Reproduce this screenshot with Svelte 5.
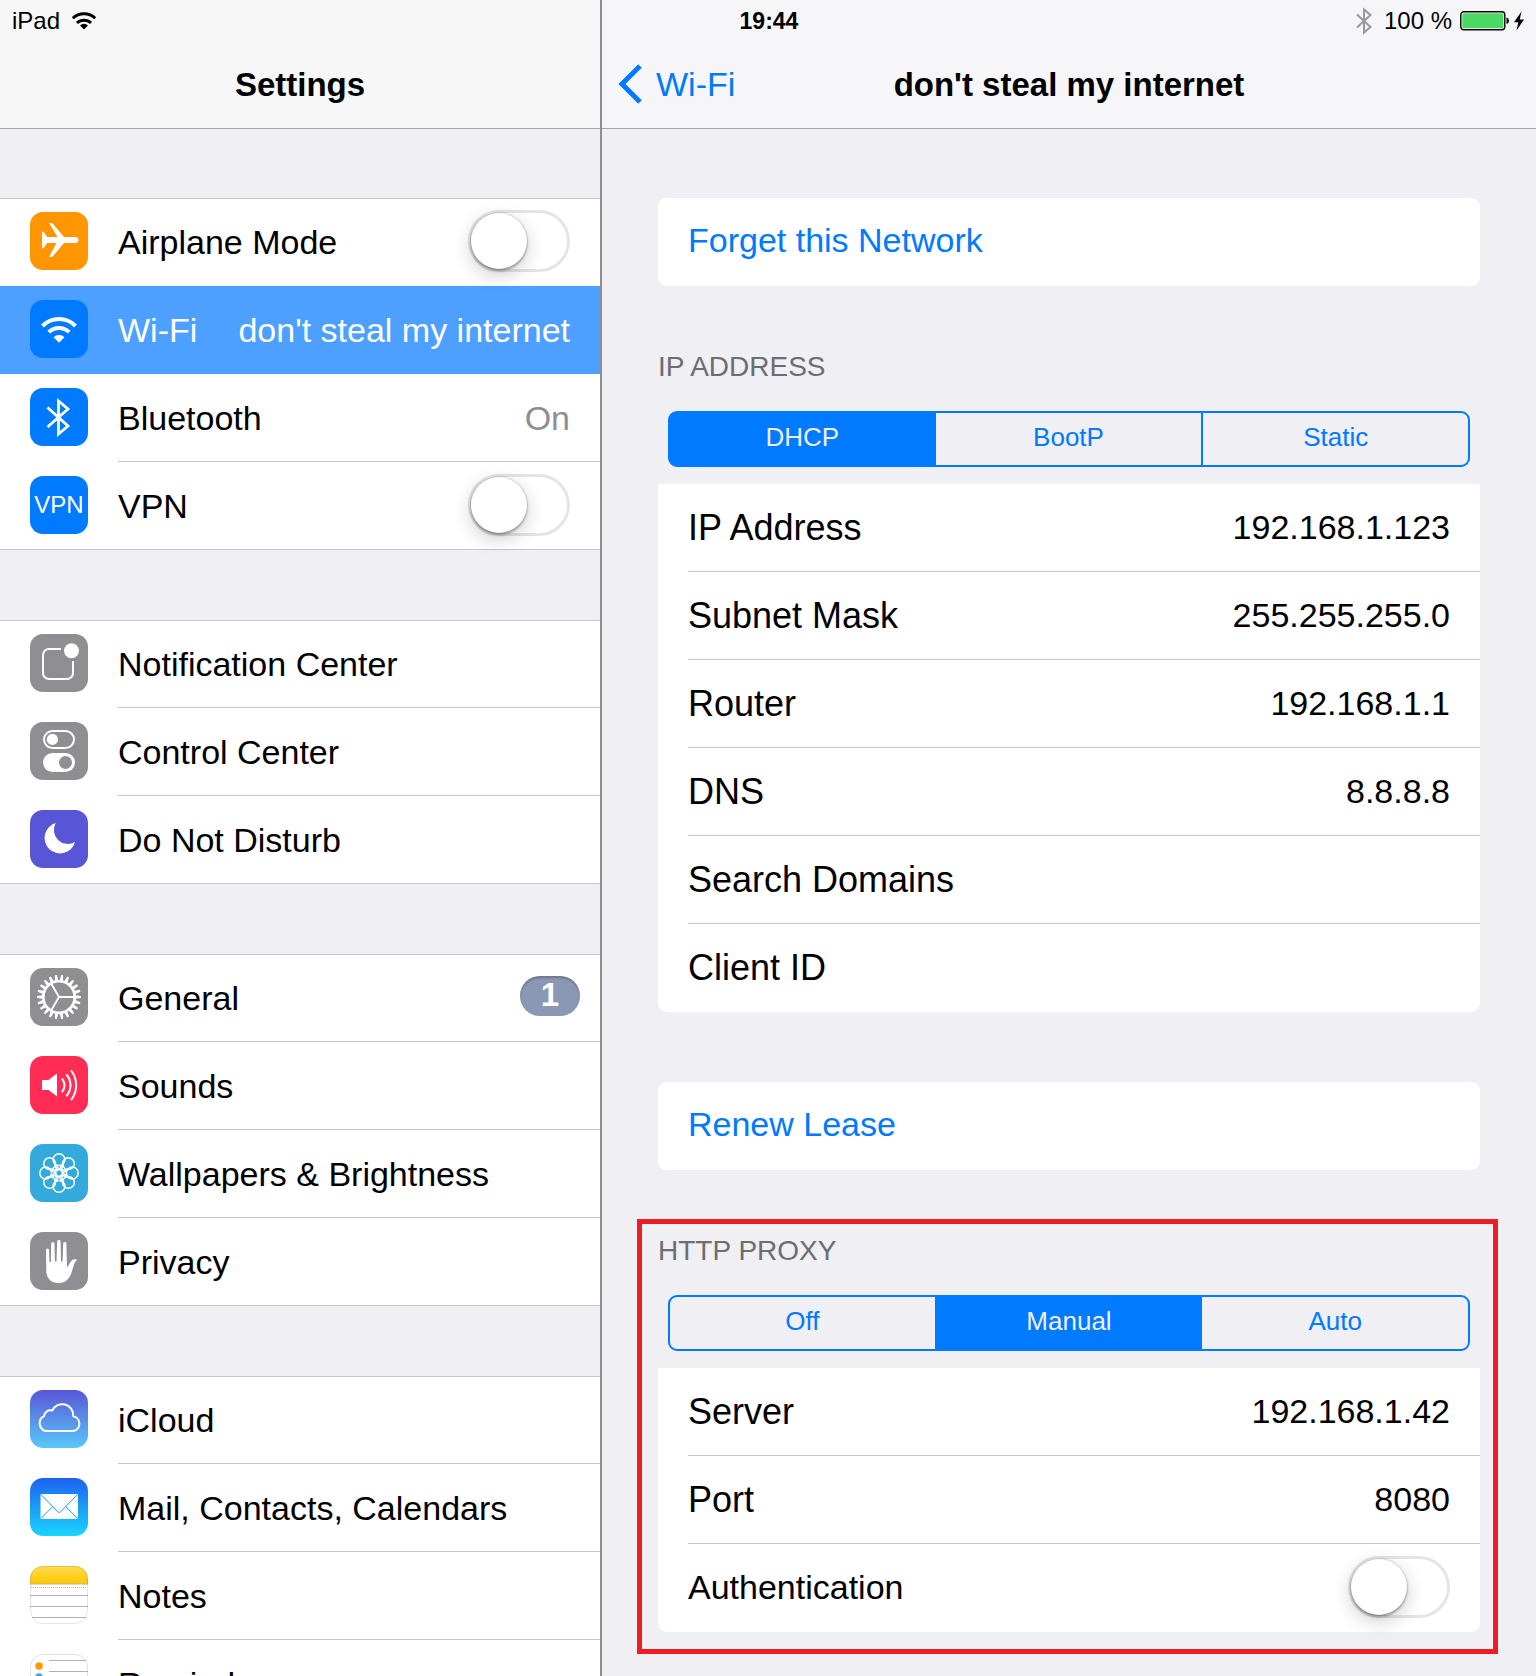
<script>
    let airplane = $state(false);
    let vpn = $state(false);
    let authentication = $state(false);

    let ipMode = $state("DHCP");
    let proxyMode = $state("Manual");

    let network = "don't steal my internet";

    let groups = [
        [
            { icon: "airplane", label: "Airplane Mode", toggle: "airplane" },
            { icon: "wifi", label: "Wi-Fi", value: network, selected: true },
            { icon: "bluetooth", label: "Bluetooth", value: "On" },
            { icon: "vpn", label: "VPN", toggle: "vpn" },
        ],
        [
            { icon: "notification", label: "Notification Center" },
            { icon: "control", label: "Control Center" },
            { icon: "moon", label: "Do Not Disturb" },
        ],
        [
            { icon: "gear", label: "General", badge: 1 },
            { icon: "sound", label: "Sounds" },
            { icon: "flower", label: "Wallpapers & Brightness" },
            { icon: "hand", label: "Privacy" },
        ],
        [
            { icon: "cloud", label: "iCloud" },
            { icon: "mail", label: "Mail, Contacts, Calendars" },
            { icon: "notes", label: "Notes" },
            { icon: "reminders", label: "Reminders" },
        ],
    ];

    let fields = $state([
        { label: "IP Address", value: "192.168.1.123" },
        { label: "Subnet Mask", value: "255.255.255.0" },
        { label: "Router", value: "192.168.1.1" },
        { label: "DNS", value: "8.8.8.8" },
        { label: "Search Domains", value: "" },
        { label: "Client ID", value: "" },
    ]);

    let proxy = $state([
        { label: "Server", value: "192.168.1.42" },
        { label: "Port", value: "8080" },
    ]);

    const tiles = {
        airplane: "#ff9500",
        wifi: "#007aff",
        bluetooth: "#007aff",
        vpn: "#007aff",
        notification: "#8e8e93",
        control: "#8e8e93",
        moon: "#5856d6",
        gear: "#8e8e93",
        sound: "#ff2d55",
        flower: "#34aadc",
        hand: "#8e8e93",
        cloud: "url(#cloud-bg)",
        mail: "url(#mail-bg)",
        notes: "#fff",
        reminders: "#fff",
    };

    const teeth = Array.from({ length: 22 }, (_, i) => 90 + (i * 360) / 22);
    const petals = Array.from({ length: 8 }, (_, i) => i * 45);
</script>

{#snippet icon(name)}
    <svg class="icon" viewBox="0 0 58 58" aria-hidden="true">
        <rect width="58" height="58" rx="13" fill={tiles[name]} />
        {#if name === "airplane"}
            <path fill="#fff" d="M12 19.500h1.200l4 5.500h10.300L19 11h3.200L34 25h11.500a3 3 0 0 1 0 6H34L22.200 45H19l7.500-14h-9.300l-4 5.500H12z" />
        {:else if name === "wifi"}
            <g fill="none" stroke="#fff" stroke-width="4">
                <path d="M12.500 26a23 23 0 0 1 33 0" />
                <path d="M18.800 32.200a14.300 14.300 0 0 1 20.400 0" />
            </g>
            <path fill="#fff" d="M23.500 37.300a7.600 7.600 0 0 1 11 0L29 42.800z" />
        {:else if name === "bluetooth"}
            <path fill="none" stroke="#fff" stroke-width="2.800" d="M17.500 19.500 38 38l-9.500 8V13l9.500 8-20.500 18" />
        {:else if name === "vpn"}
            <text x="29" y="37" text-anchor="middle" fill="#fff" font-size="24">VPN</text>
        {:else if name === "notification"}
            <path fill="none" stroke="#fff" stroke-width="2" d="M31 15H19a6 6 0 0 0-6 6v18a6 6 0 0 0 6 6h18a6 6 0 0 0 6-6V27" />
            <circle cx="41.500" cy="16.700" r="7.500" fill="#fff" />
        {:else if name === "control"}
            <rect x="14" y="9" width="30" height="17" rx="8.500" fill="none" stroke="#fff" stroke-width="2" />
            <circle cx="22.400" cy="17.400" r="5.600" fill="#fff" />
            <rect x="13" y="31" width="32" height="19" rx="9.500" fill="#fff" />
            <circle cx="35.500" cy="40.500" r="6.500" fill="#8e8e93" />
        {:else if name === "moon"}
            <path fill="#fff" d="M25.700 13A15.500 15.500 0 1 0 45 32 14 14 0 0 1 25.700 13z" />
        {:else if name === "gear"}
            <circle cx="29" cy="29" r="15.700" fill="none" stroke="#fff" stroke-width="2.600" />
            {#each teeth as angle}
                <path fill="#fff" d="M27.300 12.500 28 7h2l.7 5.500z" transform="rotate({angle} 29 29)" />
            {/each}
            <path fill="none" stroke="#fff" stroke-width="1.900" d="M45 29H29L21 15.200M29 29l-8 13.800" />
        {:else if name === "sound"}
            <path fill="#fff" d="M12 24h6.500L27 17.500v23L18.500 34H12z" />
            <g fill="none" stroke="#fff" stroke-width="2" stroke-linecap="round">
                <path d="M32.300 23a10 10 0 0 1 0 12.500" />
                <path d="M36.800 19a16 16 0 0 1 0 20.500" />
                <path d="M41.500 15a24 24 0 0 1 0 28.500" />
            </g>
        {:else if name === "flower"}
            <g fill="none" stroke="#fff" stroke-width="1.500">
                <circle cx="29" cy="29" r="3.400" />
                {#each petals as angle}
                    <g transform="rotate({angle} 29 29)">
                        <circle cx="29" cy="15.700" r="5.900" />
                        <path d="M24.300 18.500 29 25.600l4.700-7.100" />
                    </g>
                {/each}
            </g>
        {:else if name === "hand"}
            <path fill="#fff" d="M16 18a1.500 1.500 0 0 1 3 0l.5 12h1.400L21.200 11.500a1.600 1.600 0 0 1 3.200 0L24.900 29.500h1.600L27.200 9.500a1.700 1.700 0 0 1 3.400 0L31 29.500h1.600L33.200 11.500a1.600 1.600 0 0 1 3.200 0L37 34.500c1.500 0 2-2 3-3.800 1.600-3 4-4.200 7-3-2.500 2.500-3.500 6-5 11.300C40 46.500 36 51 28.500 51S16.500 46.500 16.300 39z" />
        {:else if name === "cloud"}
            <path fill="none" stroke="#fff" stroke-width="2" stroke-linejoin="round" d="M15.500 41A8 8 0 0 1 14 26.200a6.600 6.600 0 0 1 8.300-5.700 11 11 0 0 1 20.900 5.700A7.500 7.500 0 0 1 43 41z" />
        {:else if name === "mail"}
            <rect x="10.500" y="16" width="37.500" height="25" rx="1" fill="#fff" />
            <path fill="none" stroke="#1c9cf6" stroke-width="1" d="m11 16.500 16.800 17.300q1.400 1.400 2.800 0l17-17.300M11 40.500l11.500-11.700M47.500 40.500 36 28.800" />
        {:else if name === "notes"}
            <path fill="url(#notes-bg)" d="M0 18v-5A13 13 0 0 1 13 0h32a13 13 0 0 1 13 13v5z" />
            <path stroke="#c9b36a" d="M0 18h58" />
            <path stroke="#b4b4b8" stroke-dasharray="1 1" d="M1 21.500h56" />
            <path stroke="#b0b0b4" d="M0 29.500h58M0 40.500h58M2 51.500h54" />
            <rect x=".5" y=".5" width="57" height="57" rx="12.500" fill="none" stroke="#000" stroke-opacity=".1" />
        {:else if name === "reminders"}
            <rect x=".5" y=".5" width="57" height="57" rx="12.500" fill="none" stroke="#000" stroke-opacity=".12" />
            <path stroke="#b0b0b4" d="M19 6.500h37M19 17.500h39M19 28.500h39M19 39.500h39M19 50.500h37" />
            <g stroke-opacity=".5">
                <circle cx="9" cy="12" r="3.300" fill="#ff9500" stroke="#ff9500" stroke-width="2" />
                <circle cx="9" cy="23" r="3.300" fill="#34aadc" stroke="#34aadc" stroke-width="2" />
                <circle cx="9" cy="34" r="3.300" fill="#4cd964" stroke="#4cd964" stroke-width="2" />
                <circle cx="9" cy="45" r="3.300" fill="#ff3b30" stroke="#ff3b30" stroke-width="2" />
            </g>
        {/if}
    </svg>
{/snippet}

{#snippet rowBody(row)}
    {@render icon(row.icon)}
    <span class="row-body">
        <span>{row.label}</span>
        {#if row.toggle === "airplane"}
            <input class="toggle" type="checkbox" bind:checked={airplane} />
        {:else if row.toggle === "vpn"}
            <input class="toggle" type="checkbox" bind:checked={vpn} />
        {:else if row.value}
            <span class="value">{row.value}</span>
        {:else if row.badge}
            <span class="badge">{row.badge}</span>
        {/if}
    </span>
{/snippet}

{#snippet segments(options, current, select)}
    <div class="segments">
        {#each options as option}
            <button class:active={option === current} aria-pressed={option === current} onclick={() => select(option)}>
                {option}
            </button>
        {/each}
    </div>
{/snippet}

<svg class="defs" width="0" height="0" aria-hidden="true">
    <linearGradient id="cloud-bg" x2="0" y2="1">
        <stop stop-color="#5856d6" />
        <stop offset="1" stop-color="#5ac8fa" />
    </linearGradient>
    <linearGradient id="mail-bg" x2="0" y2="1">
        <stop stop-color="#1d62f0" />
        <stop offset="1" stop-color="#19d5fd" />
    </linearGradient>
    <linearGradient id="notes-bg" x2="0" y2="1">
        <stop stop-color="#fedb50" />
        <stop offset="1" stop-color="#fdc900" />
    </linearGradient>
</svg>

<div class="screen">
    <div class="status">
        <div class="status-side">
            <span>iPad</span>
            <svg width="26" height="20" viewBox="0 0 26 20" aria-hidden="true">
                <g fill="none" stroke="#000" stroke-width="3">
                    <path d="M1.800 7.300a16 16 0 0 1 22.400 0" />
                    <path d="M6 12a10 10 0 0 1 14 0" />
                </g>
                <path d="M9 14.500a5.500 5.500 0 0 1 8 0l-4 4z" />
            </svg>
        </div>
        <span class="time">19:44</span>
        <div class="status-side end">
            <svg width="16" height="28" viewBox="0 0 16 28" aria-hidden="true">
                <path fill="none" stroke="#98989b" stroke-width="2" d="M1 7.500 14.500 20 8 25.500v-23L14.500 8 1 20.500" />
            </svg>
            <span>100 %</span>
            <svg width="66" height="20" viewBox="0 0 66 20" aria-hidden="true">
                <rect x=".8" y=".8" width="44" height="18" rx="3" fill="#fff" stroke="#000" stroke-width="1.400" />
                <rect x="2.300" y="2.300" width="41" height="15" rx="1.500" fill="#4cd964" />
                <path d="M46.500 6.500q2.500.5 2.500 3.300t-2.500 3.300z" />
                <path d="M61.500.5 54 11.200h4.300L56.500 19.500 64 8.500h-4.300z" />
            </svg>
        </div>
    </div>

    <aside class="pane">
        <header>
            <h1>Settings</h1>
        </header>
        <nav class="groups">
            {#each groups as group}
                <div class="group">
                    {#each group as row}
                        {#if row.toggle}
                            <label class="row">{@render rowBody(row)}</label>
                        {:else}
                            <a class="row" class:selected={row.selected} href="#{row.icon}">{@render rowBody(row)}</a>
                        {/if}
                    {/each}
                </div>
            {/each}
        </nav>
    </aside>

    <main class="pane detail">
        <header>
            <a class="back" href="#wifi">
                <svg width="24" height="40" viewBox="0 0 24 40" aria-hidden="true">
                    <path fill="none" stroke="#007aff" stroke-width="5" d="M22 2 4 20l18 18" />
                </svg>
                Wi-Fi
            </a>
            <h1>{network}</h1>
        </header>

        <div class="content">
            <div class="card">
                <button class="action">Forget this Network</button>
            </div>

            <section>
                <h2>IP ADDRESS</h2>
                {@render segments(["DHCP", "BootP", "Static"], ipMode, (option) => (ipMode = option))}
                <div class="card attached">
                    {#each fields as field}
                        <label class="field">
                            <span>{field.label}</span>
                            <input type="text" bind:value={field.value} />
                        </label>
                    {/each}
                </div>
            </section>

            <div class="card renew">
                <button class="action">Renew Lease</button>
            </div>

            <section class="highlighted">
                <h2>HTTP PROXY</h2>
                {@render segments(["Off", "Manual", "Auto"], proxyMode, (option) => (proxyMode = option))}
                <div class="card attached">
                    {#each proxy as field}
                        <label class="field">
                            <span>{field.label}</span>
                            <input type="text" bind:value={field.value} />
                        </label>
                    {/each}
                    <label class="field plain">
                        <span>Authentication</span>
                        <input class="toggle" type="checkbox" bind:checked={authentication} />
                    </label>
                </div>
            </section>
        </div>
    </main>
</div>

<style>
    :global(body) {
        margin: 0;
        background-color: #efeff4;
    }

    .defs {
        position: absolute;
    }

    .screen {
        position: relative;
        height: 100vh;
        overflow: hidden;
        display: grid;
        grid-template-columns: 25fr 39fr;
        font-family: "Liberation Sans", Arial, sans-serif;
        font-size: 34px;
        color: #000;
        background-color: #efeff4;
    }

    a {
        color: inherit;
        text-decoration: none;
    }

    button, input {
        margin: 0;
        padding: 0;
        border: 0;
        font: inherit;
        color: inherit;
        background: none;
    }

    button {
        cursor: pointer;
    }

    /* status bar lies over both pane headers */
    .status {
        position: absolute;
        top: 0;
        left: 0;
        right: 0;
        z-index: 1;
        height: 42px;
        padding: 0 10px 0 12px;
        display: grid;
        grid-template-columns: 1fr auto 1fr;
        align-items: center;
        font-size: 24px;
    }

    .status-side {
        display: flex;
        align-items: center;
        gap: 11px;
    }

    .status-side.end {
        justify-content: flex-end;
        gap: 12px;
    }

    .status-side.end span {
        margin-right: -4px;
    }

    .time {
        font-size: 23px;
        font-weight: bold;
    }

    .pane {
        min-width: 0;
        overflow: hidden;
    }

    .detail {
        border-left: 2px solid #8e8e93;
    }

    header {
        position: relative;
        height: 129px;
        padding-top: 42px;
        box-sizing: border-box;
        border-bottom: 1px solid #a7a7ab;
        background-color: #f7f7f7;
        display: flex;
        align-items: center;
        justify-content: center;
    }

    .detail header {
        background-color: #f6f6f8;
    }

    h1 {
        margin: 0;
        font-size: 33px;
        line-height: 40px;
        font-weight: bold;
    }

    .back {
        position: absolute;
        left: 16px;
        bottom: 24px;
        display: flex;
        align-items: center;
        gap: 14px;
        color: #007aff;
    }

    .groups {
        padding-top: 69px;
        display: flex;
        flex-direction: column;
        gap: 70px;
    }

    .group {
        background-color: #fff;
        box-shadow: inset 0 1px 0 #c8c7cc, inset 0 -1px 0 #c8c7cc;
    }

    .row {
        height: 88px;
        padding-left: 30px;
        display: flex;
        align-items: center;
        gap: 30px;
    }

    .icon {
        flex: none;
        width: 58px;
        height: 58px;
        margin-bottom: 2px;
    }

    .row-body {
        flex: 1;
        align-self: stretch;
        padding: 2px 30px 0 0;
        box-sizing: border-box;
        border-bottom: 1px solid #c8c7cc;
        display: flex;
        align-items: center;
        justify-content: space-between;
        white-space: nowrap;
    }

    .row:last-child .row-body,
    .selected .row-body,
    .row:has(+ .selected) .row-body {
        border-bottom-color: transparent;
    }

    .selected {
        background-color: #4da0ff;
        color: #fff;
    }

    .value {
        color: #8e8e93;
    }

    .selected .value {
        color: #fff;
    }

    .badge {
        min-width: 60px;
        height: 40px;
        margin: 0 -10px 6px 0;
        border-radius: 20px;
        box-sizing: border-box;
        background-color: #8b98b3;
        box-shadow: inset 0 2px 2px rgba(60,70,100,0.4);
        color: #fff;
        font-size: 33px;
        font-weight: bold;
        line-height: 38px;
        text-align: center;
    }

    .toggle {
        appearance: none;
        flex: none;
        width: 102px;
        height: 62px;
        margin-bottom: 2px;
        box-sizing: border-box;
        border: 3px solid #e5e5e5;
        border-radius: 31px;
        background-color: #fff;
        cursor: pointer;
    }

    .row .toggle {
        margin-bottom: 4px;
    }

    .toggle::before {
        content: "";
        display: block;
        width: 56px;
        height: 56px;
        border-radius: 50%;
        background-color: #fff;
        box-shadow: 0 0 1px 1px rgba(0,0,0,0.1), 0 2px 3px rgba(0,0,0,0.3), 0 6px 20px rgba(0,0,0,0.2);
    }

    .toggle:checked {
        border-color: #4cd964;
        background-color: #4cd964;
    }

    .toggle:checked::before {
        margin-left: 40px;
    }

    .content {
        padding: 69px 56px 0;
    }

    .card {
        border-radius: 9px;
        background-color: #fff;
    }

    .attached {
        border-radius: 0 0 9px 9px;
    }

    .renew {
        margin-top: 70px;
    }

    .action {
        width: 100%;
        height: 88px;
        padding: 0 30px 4px;
        color: #007aff;
        text-align: left;
    }

    section {
        position: relative;
        padding-top: 63px;
    }

    .highlighted::after {
        content: "";
        position: absolute;
        inset: 49px -18px -22px -21px;
        border: 5px solid #ee1c24;
        pointer-events: none;
    }

    h2 {
        margin: 0 0 26px;
        color: #6d6d72;
        font-size: 28px;
        font-weight: normal;
        line-height: 36px;
    }

    .segments {
        height: 56px;
        margin: 0 10px 17px;
        box-sizing: border-box;
        border: 2px solid #007aff;
        border-radius: 9px;
        background-color: #007aff;
        overflow: hidden;
        display: grid;
        grid-template-columns: repeat(3, 1fr);
        gap: 2px;
    }

    .segments button {
        padding-bottom: 3px;
        background-color: #efeff4;
        color: #007aff;
        font-size: 26px;
    }

    /* the filled segment reaches the next one without a divider */
    .segments .active + button {
        margin-left: -1px;
    }

    .segments .active {
        background-color: #007aff;
        color: #efeff4;
    }

    .field {
        height: 88px;
        margin-left: 30px;
        padding-right: 30px;
        box-sizing: border-box;
        border-bottom: 1px solid #c8c7cc;
        display: flex;
        align-items: center;
        justify-content: space-between;
        gap: 20px;
        font-size: 36px;
        white-space: nowrap;
    }

    .field:last-child {
        border-bottom-color: transparent;
    }

    .field input[type="text"] {
        flex: 1;
        min-width: 0;
        font-size: 34px;
        text-align: right;
        outline: none;
    }

    .plain {
        font-size: 34px;
    }
</style>
